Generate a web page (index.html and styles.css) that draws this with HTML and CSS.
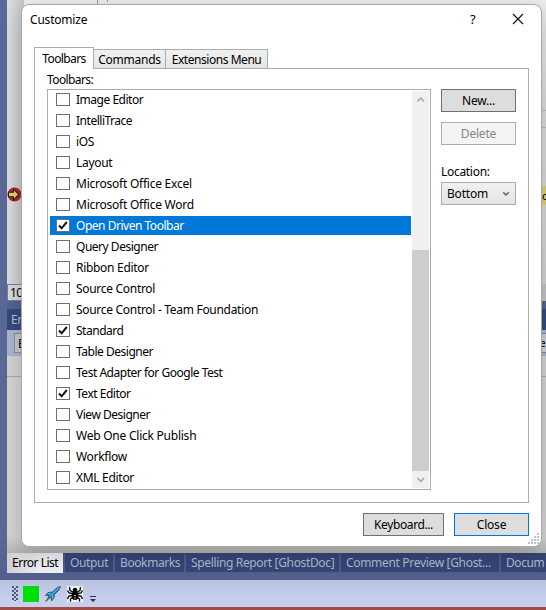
FILE: index.html
```
<!DOCTYPE html>
<html lang="en">
<head>
<meta charset="utf-8">
<title>Customize</title>
<link rel="stylesheet" href="styles.css">
</head>
<body>
<div class="ide">
  <div class="workspace">
    <div class="editor">
      <div class="margin">
        <svg class="breakpoint" width="15" height="15" viewBox="0 0 15 15"><circle cx="7.5" cy="7.5" r="7" fill="#b4232f"/><path d="M1.500 5.200h5V2l5.500 5.500-5.500 5.500V9.800h-5z" fill="#edcf75" stroke="#292014" stroke-width="1.100"/></svg>
      </div>
      <div class="code"><span class="guide"></span><span class="guide short"></span></div>
      <div class="edge"><div class="lines"></div><div class="highlight">c</div></div>
    </div>
    <div class="zoombar"><span class="zoom">10</span></div>
    <div class="gap"></div>
    <div class="panel-title">Er</div>
    <div class="panel-tools"><span class="filter">E</span><span class="search">e</span></div>
    <div class="columns"></div>
    <div class="results"></div>
    <nav class="doc-tabs">
      <span class="doc-tab current t1">Error List</span>
      <span class="doc-tab t2">Output</span>
      <span class="doc-tab t3">Bookmarks</span>
      <span class="doc-tab t4">Spelling Report [GhostDoc]</span>
      <span class="doc-tab t5">Comment Preview [Ghost...</span>
      <span class="doc-tab t6">Docum</span>
    </nav>
  </div>
  <div class="toolbar">
    <span class="grip"></span>
    <span class="green"></span>
    <svg class="rocket" width="16" height="16" viewBox="0 0 16 16"><path d="M15.500.5 12 1.500 7.500 6 3 6.500.5 9.500 4 9.500 2.500 13l3.500-1.500.5 3.500L9 12l.5-3.500L14 4z" fill="#1684c4" stroke="#3c4c5e" stroke-width=".8"/><path d="M14 1.500 5 10.500M3.500 8 6 7.500M7.500 12.500l.5-3" stroke="#79c9ef" stroke-width="1" fill="none"/><path d="M.5 15.500 4 12" stroke="#66686c" stroke-width="1.500"/></svg>
    <svg class="spider" width="16" height="16" viewBox="0 0 16 16"><path fill="#f0f2f3" d="M0 0h16v16H0z"/><ellipse cx="8" cy="9.500" rx="3.400" ry="4.500"/><circle cx="8" cy="4" r="2.300"/><path d="M6 6 3 4.500 2.500 1M10 6l3-1.500L13.500 1M5.500 7.500 2 7 .5 4.500M10.500 7.500 14 7l1.500-2.500M5 9.500l-3 .5L.5 13M11 9.500l3 .5 1.500 3M5.500 11.500 3.500 13v2.500M10.500 11.500l2 1.500v2.500" fill="none" stroke="#000" stroke-width="1.300"/><path d="M7 9.500h2M8 11v2" stroke="#b5b5b5"/></svg>
    <svg class="more" width="7" height="8" viewBox="0 0 7 8"><path d="M0 0h6v1H0zM0 3h6L3 6z" fill="#27335c"/></svg>
  </div>
  <div class="statusbar"></div>
</div>

<section class="dialog">
  <header class="titlebar">
    <span class="title">Customize</span>
    <span class="help">?</span>
    <svg class="close-x" width="12" height="12" viewBox="0 0 12 12"><path d="M1 1l10 10M11 1 1 11" stroke="#111" stroke-width="1.100"/></svg>
  </header>
  <div class="tabs">
    <span class="tab selected">Toolbars</span>
    <span class="tab commands">Commands</span>
    <span class="tab extensions">Extensions Menu</span>
  </div>
  <div class="page">
    <div class="left">
      <div class="label">Toolbars:</div>
      <div class="listbox">
        <ul class="items">
          <li class="snug"><i></i>Image Editor</li>
          <li class="snug"><i></i>IntelliTrace</li>
          <li><i></i>iOS</li>
          <li><i></i>Layout</li>
          <li class="loose"><i></i>Microsoft Office Excel</li>
          <li class="loose"><i></i>Microsoft Office Word</li>
          <li class="active snug"><i><svg viewBox="0 0 12 11"><path d="M2 5.500 4.600 8.300 9.800 2"/></svg></i>Open Driven Toolbar</li>
          <li class="snug"><i></i>Query Designer</li>
          <li><i></i>Ribbon Editor</li>
          <li><i></i>Source Control</li>
          <li><i></i>Source Control - Team Foundation</li>
          <li class="snug"><i><svg viewBox="0 0 12 11"><path d="M2 5.500 4.600 8.300 9.800 2"/></svg></i>Standard</li>
          <li class="snug"><i></i>Table Designer</li>
          <li class="snug"><i></i>Test Adapter for Google Test</li>
          <li class="snug"><i><svg viewBox="0 0 12 11"><path d="M2 5.500 4.600 8.300 9.800 2"/></svg></i>Text Editor</li>
          <li class="snug"><i></i>View Designer</li>
          <li class="loose"><i></i>Web One Click Publish</li>
          <li><i></i>Workflow</li>
          <li><i></i>XML Editor</li>
        </ul>
        <div class="scrollbar">
          <svg class="arrow" width="17" height="17" viewBox="0 0 17 17"><path d="M5.500 10.500 8.800 7l3.300 3.500"/></svg>
          <div class="track"></div>
          <div class="thumb"></div>
          <svg class="arrow" width="17" height="17" viewBox="0 0 17 17"><path d="M5.500 7 8.800 10.500 12.100 7"/></svg>
        </div>
      </div>
    </div>
    <div class="side">
      <div class="button dark">New...</div>
      <div class="button disabled">Delete</div>
      <div class="location">Location:</div>
      <div class="select">Bottom<svg width="8" height="6" viewBox="0 0 8 6"><path d="M1.200 1.200 4 4l2.800-2.800" fill="none" stroke="#606060" stroke-width="1.400"/></svg></div>
    </div>
  </div>
  <footer class="actions">
    <div class="button dark keyboard">Keyboard...</div>
    <div class="button primary">Close</div>
  </footer>
  <svg class="resize" width="11" height="11" viewBox="0 0 11 11"><path d="M9 0h2v2H9zM6 3h2v2H6zM9 3h2v2H9zM3 6h2v2H3zM6 6h2v2H6zM9 6h2v2H9zM0 9h2v2H0zM3 9h2v2H3zM6 9h2v2H6zM9 9h2v2H9z" fill="#c0c3cf"/></svg>
</section>
</body>
</html>
```
FILE: styles.css
```
* { box-sizing: border-box; }
body {
  margin: 0;
  width: 546px;
  height: 610px;
  overflow: hidden;
  position: relative;
  font: 12px/16px "Noto Sans", "Open Sans", sans-serif;
  letter-spacing: -0.3px;
  color: #000;
  white-space: nowrap;
}

/* Window behind the dialog */
.ide { height: 610px; display: flex; flex-direction: column; background: #5b6998; }
.workspace { height: 580px; padding-left: 7px; display: flex; flex-direction: column; background: linear-gradient(#5b6998 540px, #525f8b); overflow: hidden; }
.editor { height: 284px; display: flex; background: linear-gradient(#ececec, #dadada 120px, #d3d3d3); }
.margin { width: 17px; padding: 187px 0 0 0; background: linear-gradient(90deg, #dcdee0, #c5c6c8); }
.breakpoint { display: block; }
.code { flex: 1; display: flex; padding-left: 73px; gap: 9px; }
.guide { width: 1px; height: 4px; background: #999; }
.guide.short { height: 2px; }
.edge { width: 6px; padding-top: 110px; }
.lines { height: 18px; border: solid #bbbcc2; border-width: 1px 0; }
.highlight { margin-top: 58px; height: 19px; line-height: 19px; padding-left: 2px; background: #dfd071; font-size: 11px; }
.zoombar { height: 17px; background: #c3c3c5; }
.zoom { display: block; width: 17px; height: 17px; line-height: 16px; padding-left: 2px; letter-spacing: -.6px; border: 1px solid #6f7da9; border-width: 1px 0 1px 1px; background: #d9dadc; }
.gap { height: 8px; background: #56648f; }
.panel-title { height: 21px; line-height: 21px; padding-left: 4px; color: #bcc2d2; background: #354a7d; }
.panel-tools { height: 26px; padding: 3px 0; display: flex; justify-content: space-between; background: #aab5d3; }
.filter { width: 14px; margin-left: 7px; padding-left: 3px; border: 1px solid #888fa3; background: #c6c7c9; line-height: 19px; }
.search { width: 6px; border: solid #7d879e; border-width: 1px 0; background: #ccd0d4; line-height: 19px; font-size: 10px; }
.columns { height: 21px; background: #d3d3d3; border-bottom: 1px solid #a9aaae; }
.results { height: 176px; background: linear-gradient(#d4d4d4 160px, #b5b5b5); }
.doc-tabs { display: flex; gap: 2px; height: 20px; flex: none; background: linear-gradient(#35487a 1px, #4f5c88 1px); }
.doc-tab { height: 19px; line-height: 20px; color: #b0b8cc; background: #354677; padding-left: 5px; flex: none; }
.doc-tab.current { height: 20px; color: #000; background: linear-gradient(90deg, #d0d0d5, #efeff3 60%); }
.t1 { width: 56px; letter-spacing: -0.5px; }
.t2 { width: 48px; letter-spacing: -0.35px; }
.t3 { width: 69px; letter-spacing: -0.4px; }
.t4 { width: 153px; letter-spacing: -0.35px; }
.t5 { width: 158px; letter-spacing: -0.32px; }
.t6 { width: 45px; letter-spacing: -0.4px; }
.toolbar { height: 27px; padding: 6px 0 0 12px; display: flex; background: linear-gradient(#b9c1df, #c6d0ed 20px); }
.grip { width: 6px; height: 15px; margin-right: 5px; background: radial-gradient(circle at 1px 1px, #4e5a82 .8px, transparent 1px) 0 0 / 4px 4px, radial-gradient(circle at 3px 3px, #4e5a82 .8px, transparent 1px) 0 0 / 4px 4px; }
.green { width: 16px; height: 16px; background: #00e000; border: 1px solid #00d820; }
.rocket { margin-left: 6px; }
.spider { margin-left: 6px; }
.more { margin: 10px 0 0 7px; }
.statusbar { height: 3px; background: #a34b42; }

/* Dialog */
.dialog { position: absolute; left: 21px; top: 4px; width: 521px; height: 543px; border: 1px solid #a9a9a9; border-radius: 8px; background: #fff; box-shadow: 0 7px 22px rgba(0, 0, 0, .2); }
.titlebar { height: 42px; display: flex; padding-left: 8px; }
.title { width: 438px; padding-top: 7px; letter-spacing: -0.2px; }
.help { width: 44px; padding-top: 6px; font-size: 13px; padding-left: 2px; }
.close-x { margin-top: 8px; }
.tabs { height: 21px; display: flex; align-items: flex-end; padding-left: 12px; position: relative; z-index: 1; }
.tab { height: 19px; line-height: 19px; border: 1px solid #acacac; border-bottom: 0; background: linear-gradient(#f0f0f0, #e5e5e5); text-align: center; }
.tab.selected { width: 60px; height: 22px; line-height: 21px; background: #fff; margin-bottom: -1px; letter-spacing: -.6px; }
.commands { width: 73px; margin-left: -1px; letter-spacing: -.25px; }
.extensions { width: 103px; margin-left: -1px; letter-spacing: -.45px; }
.page { width: 495px; height: 435px; margin-left: 12px; border: 1px solid #acacac; display: flex; padding: 2px 0 0 12px; }
.left { width: 384px; }
.label { height: 18px; line-height: 17px; letter-spacing: -.6px; }
.listbox { height: 401px; display: flex; justify-content: space-between; border: 1px solid #acacac; padding: 0 1px 0 2px; }
.items { margin: 0; padding: 0; width: 361px; list-style: none; }
.items li { height: 19px; margin-bottom: 2px; display: flex; align-items: center; gap: 6px; padding-left: 6px; line-height: 19px; }
.items .snug { letter-spacing: -.48px; }
.items .loose { letter-spacing: -.24px; }
.items i { width: 14px; height: 13px; border: 1px solid #707070; background: #fff; flex: none; display: flex; }
.items i svg { width: 12px; height: 11px; fill: none; stroke: #151515; stroke-width: 2; }
.items .active { background: #0078d7; color: #fff; }
.scrollbar { width: 17px; margin: 1px 0; background: #f0f0f0; display: flex; flex-direction: column; }
.arrow { fill: none; stroke: #a3a3a3; stroke-width: 1.5; flex: none; }
.track { height: 142px; }
.thumb { flex: 1; background: #cdcdcd; }
.side { width: 75px; margin: 18px 0 0 10px; }
.button { width: 75px; height: 23px; border: 1px solid #acacac; text-align: center; line-height: 22px; background: #ddd; letter-spacing: -.2px; }
.button.dark { border-color: #707070; }
.button.disabled { margin-top: 10px; background: #f4f4f4; color: #858585; }
.location { margin-top: 18px; height: 19px; line-height: 18px; }
.select { height: 23px; line-height: 21px; border: 1px solid #acacac; background: linear-gradient(#f0f0f0, #e5e5e5); padding: 0 5px; display: flex; justify-content: space-between; align-items: center; letter-spacing: -.2px; }
.actions { display: flex; justify-content: flex-end; gap: 10px; padding: 10px 12px 0 0; }
.keyboard { width: 81px; }
.button.keyboard { letter-spacing: -.4px; }
.button.primary { border-color: #0078d7; }
.resize { position: absolute; right: 2px; bottom: 2px; }
```
